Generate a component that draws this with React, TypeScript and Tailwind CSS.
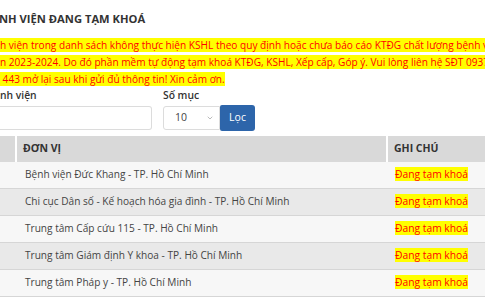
import React from 'react';
import { ChevronDown } from 'lucide-react';

const rows = [
  'Bệnh viện Đức Khang - TP. Hồ Chí Minh',
  'Chi cục Dân số - Kế hoạch hóa gia đình - TP. Hồ Chí Minh',
  'Trung tâm Cấp cứu 115 - TP. Hồ Chí Minh',
  'Trung tâm Giám định Y khoa - TP. Hồ Chí Minh',
  'Trung tâm Pháp y - TP. Hồ Chí Minh',
];

export default function App() {
  return (
    <div
      className="w-[485px] h-[300px] overflow-hidden bg-white text-[#333]"
      style={{ fontFamily: '"Open Sans", "Noto Sans", sans-serif' }}
    >
      <div className="pt-[9px]">
        <h1 className="text-[11.2px] leading-[20px] font-bold text-[#333] whitespace-nowrap -ml-[1px]">
          NH VIỆN ĐANG TẠM KHOÁ
        </h1>

        <p className="mt-[8px] text-[10.1px] leading-[17px] text-[#ff0000] whitespace-nowrap">
          <span className="bg-[#ffff00]">h viện trong danh sách không thực hiện KSHL theo quy định hoặc chưa báo cáo KTĐG chất lượng bệnh viện</span>
          <br />
          <span className="bg-[#ffff00]">n 2023-2024. Do đó phần mềm tự động tạm khoá KTĐG, KSHL, Xếp cấp, Góp ý. Vui lòng liên hệ SĐT 0937 xxx</span>
          <br />
          <span className="bg-[#ffff00]">&nbsp;443 mở lại sau khi gửi đủ thông tin! Xin cảm ơn.</span>
        </p>

        <div className="flex items-start">
          <div className="w-[152px] flex flex-col">
            <label className="text-[10.3px] leading-[14px] font-semibold text-[#333] whitespace-nowrap">nh viện</label>
            <div className="mt-[4px] h-[24px] border border-[#dcdcdc] border-l-0 rounded-r-[3px] bg-white" />
          </div>
          <div className="ml-[11px] flex flex-col">
            <label className="text-[10.3px] leading-[14px] font-semibold text-[#333]">Số mục</label>
            <div className="mt-[3px] h-[26px] flex items-center">
              <div className="w-[57px] h-[24px] border border-[#dcdcdc] rounded-l-[3px] bg-white flex items-center pl-[11px] pr-[5px]">
                <span className="text-[10.5px] text-[#444] flex-1">10</span>
                <ChevronDown size={8} strokeWidth={1.5} className="text-[#777]" />
              </div>
              <button className="w-[35px] h-[26px] bg-[#2d65aa] text-white text-[10.5px] rounded-r-[3px] rounded-l-[2px]">
                Lọc
              </button>
            </div>
          </div>
        </div>

        <div className="mt-[5px] w-[520px]">
          <div className="flex h-[26px] bg-[#d9d9d9] text-[10.5px] font-bold text-[#333]">
            <div className="w-[17px] border-r-2 border-white" />
            <div className="w-[371px] pl-[6px] flex items-center border-r-2 border-white">ĐƠN VỊ</div>
            <div className="flex-1 pl-[6px] flex items-center">GHI CHÚ</div>
          </div>
          {rows.map((name, i) => (
            <div
              key={i}
              className={`flex h-[27px] border-b border-[#d6d6d6] text-[10.3px] items-center ${
                i % 2 === 0 ? 'bg-[#f7f7f7]' : 'bg-[#e9e9e9]'
              }`}
            >
              <div className="w-[19px]" />
              <div className="w-[371px] pl-[6px] text-[10.1px] text-[#444] whitespace-nowrap">{name}</div>
              <div className="flex-1 pl-[5px]">
                <span className="bg-[#ffff00] text-[#ff0000] whitespace-nowrap">Đang tạm khoá</span>
              </div>
            </div>
          ))}
        </div>
      </div>
    </div>
  );
}
